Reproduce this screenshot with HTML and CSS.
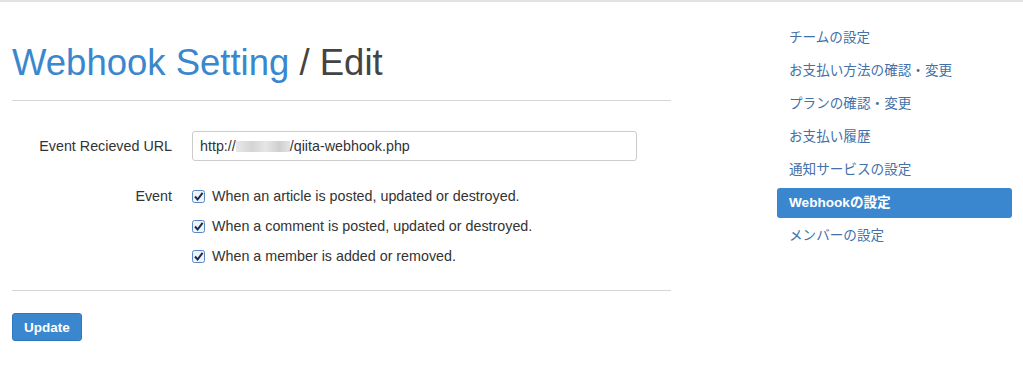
FILE: index.html
```html
<!DOCTYPE html>
<html lang="ja">

<head>
  <meta charset="UTF-8" />
  <title>Webhook Setting / Edit</title>
  <link rel="stylesheet" href="styles.css">
</head>

<body>
  <div class="page">
    <!-- Main column -->
    <main class="main">
      <h1 class="title"><a href="#">Webhook Setting</a> / Edit</h1>
      <hr class="rule">

      <form class="form">
        <div class="row">
          <label class="label" for="url">Event Recieved URL</label>
          <div class="field">
            <div class="input">http://<span class="blur"></span>/qiita-webhook.php</div>
          </div>
        </div>

        <div class="row row-event">
          <span class="label">Event</span>
          <div class="field checks">
            <label class="check"><span class="box"><svg viewBox="0 0 13 13" width="13" height="13"><rect x="0.5" y="0.5" width="12" height="12" rx="2" fill="#eef4fc" stroke="#5a87c0"/><path d="M3 6.5 L5.6 9.5 L10.6 2.8" fill="none" stroke="#1c2a4a" stroke-width="2"/></svg></span>When an article is posted, updated or destroyed.</label>
            <label class="check"><span class="box"><svg viewBox="0 0 13 13" width="13" height="13"><rect x="0.5" y="0.5" width="12" height="12" rx="2" fill="#eef4fc" stroke="#5a87c0"/><path d="M3 6.5 L5.6 9.5 L10.6 2.8" fill="none" stroke="#1c2a4a" stroke-width="2"/></svg></span>When a comment is posted, updated or destroyed.</label>
            <label class="check"><span class="box"><svg viewBox="0 0 13 13" width="13" height="13"><rect x="0.5" y="0.5" width="12" height="12" rx="2" fill="#eef4fc" stroke="#5a87c0"/><path d="M3 6.5 L5.6 9.5 L10.6 2.8" fill="none" stroke="#1c2a4a" stroke-width="2"/></svg></span>When a member is added or removed.</label>
          </div>
        </div>

        <hr class="rule rule-bottom">
        <button type="button" class="btn">Update</button>
      </form>
    </main>

    <!-- Sidebar -->
    <nav class="side">
      <a class="side-item" href="#">チームの設定</a>
      <a class="side-item" href="#">お支払い方法の確認・変更</a>
      <a class="side-item" href="#">プランの確認・変更</a>
      <a class="side-item" href="#">お支払い履歴</a>
      <a class="side-item" href="#">通知サービスの設定</a>
      <a class="side-item active" href="#">Webhookの設定</a>
      <a class="side-item" href="#">メンバーの設定</a>
    </nav>
  </div>
</body>

</html>
```

FILE: styles.css
```css
/* --- Base --- */
:root {
  --link: #3a87cf;
  --side-link: #4470a8;
  --text: #333;
  --rule: #d6d6d6;
}

body {
  margin: 0;
  border-top: 2px solid #e1e1e6;
  font-family: "Liberation Sans", Arial, "Noto Sans CJK JP", sans-serif;
  color: var(--text);
  background: #fff;
}

.page {
  display: flex;
  padding: 0 11px 0 12px;
}

/* --- Main column --- */
.main {
  width: 659px;
}

.title {
  margin: 40px 0 0;
  font-size: 36.5px;
  font-weight: normal;
  line-height: 42px;
  color: #444;
}

.title a {
  color: var(--link);
  text-decoration: none;
}

.rule {
  border: 0;
  border-top: 1px solid var(--rule);
  margin: 16px 0 0;
}

.form {
  padding-top: 30px;
}

.row {
  display: flex;
  align-items: center;
  gap: 20px;
  font-size: 14.3px;
}

.label {
  width: 160px;
  text-align: right;
  flex-shrink: 0;
}

.row-event {
  align-items: flex-start;
  margin-top: 25px;
}

.row-event .label {
  line-height: 20px;
}

.input {
  width: 445px;
  height: 30px;
  box-sizing: border-box;
  border: 1px solid #ccc;
  border-radius: 3px;
  padding: 0 7px;
  line-height: 28px;
  font-size: 14.3px;
  color: #333;
}

.blur {
  display: inline-block;
  width: 54px;
  height: 11px;
  vertical-align: -1px;
  background: linear-gradient(90deg, #e8e8e8, #d4d4d4 30%, #e6e6e6 55%, #cfcfcf 80%, #e4e4e4);
}

.checks {
  display: flex;
  flex-direction: column;
  gap: 10px;
}

.check {
  display: flex;
  align-items: center;
  line-height: 20px;
}

.box {
  display: inline-flex;
  margin-right: 7px;
}

.rule-bottom {
  margin-top: 24px;
}

.btn {
  margin-top: 22px;
  height: 28px;
  padding: 0 11px;
  border: 1px solid #2f77bc;
  border-radius: 3px;
  background: var(--link);
  color: #fff;
  font-family: inherit;
  font-size: 13.5px;
  font-weight: bold;
  cursor: pointer;
}

/* --- Sidebar --- */
.side {
  margin-left: 106px;
  width: 235px;
  padding-top: 21px;
  display: flex;
  flex-direction: column;
  gap: 3px;
}

.side-item {
  display: block;
  height: 30px;
  line-height: 30px;
  padding: 0 12px;
  border-radius: 3px;
  font-size: 13.6px;
  color: var(--side-link);
  text-decoration: none;
}

.side-item.active {
  background: var(--link);
  color: #fff;
  font-weight: bold;
}
```
